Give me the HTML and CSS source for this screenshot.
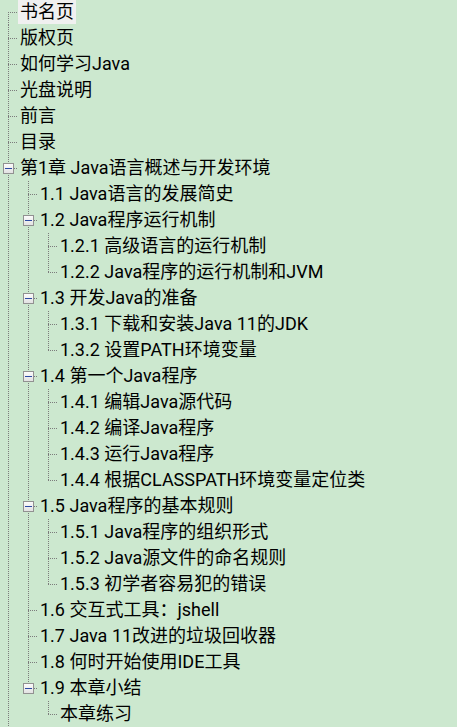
FILE: index.html
```html
<!DOCTYPE html>
<html lang="zh-CN">
<head>
<meta charset="utf-8">
<title>目录树</title>
<link rel="stylesheet" href="styles.css">
</head>
<body>
<div class="tree">
  <div class="row"><span class="c f"></span><span class="label sel">书名页</span></div>
  <div class="row"><span class="c t"></span><span class="label">版权页</span></div>
  <div class="row"><span class="c t"></span><span class="label">如何学习Java</span></div>
  <div class="row"><span class="c t"></span><span class="label">光盘说明</span></div>
  <div class="row"><span class="c t"></span><span class="label">前言</span></div>
  <div class="row"><span class="c t"></span><span class="label">目录</span></div>
  <div class="row"><span class="c t"><span class="box"><span class="minus"></span></span></span><span class="label">第1章 Java语言概述与开发环境</span></div>
  <div class="row"><span class="c p"></span><span class="c t"></span><span class="label">1.1 Java语言的发展简史</span></div>
  <div class="row"><span class="c p"></span><span class="c t"><span class="box"><span class="minus"></span></span></span><span class="label">1.2 Java程序运行机制</span></div>
  <div class="row"><span class="c p"></span><span class="c p"></span><span class="c t"></span><span class="label">1.2.1 高级语言的运行机制</span></div>
  <div class="row"><span class="c p"></span><span class="c p"></span><span class="c l"></span><span class="label">1.2.2 Java程序的运行机制和JVM</span></div>
  <div class="row"><span class="c p"></span><span class="c t"><span class="box"><span class="minus"></span></span></span><span class="label">1.3 开发Java的准备</span></div>
  <div class="row"><span class="c p"></span><span class="c p"></span><span class="c t"></span><span class="label">1.3.1 下载和安装Java 11的JDK</span></div>
  <div class="row"><span class="c p"></span><span class="c p"></span><span class="c l"></span><span class="label">1.3.2 设置PATH环境变量</span></div>
  <div class="row"><span class="c p"></span><span class="c t"><span class="box"><span class="minus"></span></span></span><span class="label">1.4 第一个Java程序</span></div>
  <div class="row"><span class="c p"></span><span class="c p"></span><span class="c t"></span><span class="label">1.4.1 编辑Java源代码</span></div>
  <div class="row"><span class="c p"></span><span class="c p"></span><span class="c t"></span><span class="label">1.4.2 编译Java程序</span></div>
  <div class="row"><span class="c p"></span><span class="c p"></span><span class="c t"></span><span class="label">1.4.3 运行Java程序</span></div>
  <div class="row"><span class="c p"></span><span class="c p"></span><span class="c l"></span><span class="label">1.4.4 根据CLASSPATH环境变量定位类</span></div>
  <div class="row"><span class="c p"></span><span class="c t"><span class="box"><span class="minus"></span></span></span><span class="label">1.5 Java程序的基本规则</span></div>
  <div class="row"><span class="c p"></span><span class="c p"></span><span class="c t"></span><span class="label">1.5.1 Java程序的组织形式</span></div>
  <div class="row"><span class="c p"></span><span class="c p"></span><span class="c t"></span><span class="label">1.5.2 Java源文件的命名规则</span></div>
  <div class="row"><span class="c p"></span><span class="c p"></span><span class="c l"></span><span class="label">1.5.3 初学者容易犯的错误</span></div>
  <div class="row"><span class="c p"></span><span class="c t"></span><span class="label">1.6 交互式工具：jshell</span></div>
  <div class="row"><span class="c p"></span><span class="c t"></span><span class="label">1.7 Java 11改进的垃圾回收器</span></div>
  <div class="row"><span class="c p"></span><span class="c t"></span><span class="label">1.8 何时开始使用IDE工具</span></div>
  <div class="row"><span class="c p"></span><span class="c l"><span class="box"><span class="minus"></span></span></span><span class="label">1.9 本章小结</span></div>
  <div class="row"><span class="c p"></span><span class="c b"></span><span class="c l"></span><span class="label">本章练习</span></div>
</div>
</body>
</html>
```
FILE: styles.css
```css
html, body {
  margin: 0;
  padding: 0;
  background: #cce8cf;
  overflow: hidden;
}

body {
  font-family: Roboto, "Noto Sans CJK SC", sans-serif;
  font-size: 18px;
  color: #000;
}

.tree {
  margin-top: -1px;
  --dot: #7c7c7c;
  --v: repeating-linear-gradient(to bottom, var(--dot) 0 1px, transparent 1px 2px);
  --h: repeating-linear-gradient(to right, var(--dot) 0 1px, transparent 1px 2px);
}

.row {
  display: flex;
  align-items: center;
  height: 26px;
}

.c {
  flex: none;
  display: flex;
  align-items: flex-start;
  width: 20px;
  height: 26px;
  background-repeat: no-repeat;
}

/* pass-through vertical line */
.c.p {
  background-image: var(--v);
  background-size: 1px 26px;
  background-position: 8px 0;
}

/* branch with a following sibling */
.c.t {
  background-image: var(--v), var(--h);
  background-size: 1px 26px, 10px 1px;
  background-position: 8px 0, 8px 13px;
}

/* last branch */
.c.l {
  background-image: var(--v), var(--h);
  background-size: 1px 14px, 10px 1px;
  background-position: 8px 0, 8px 13px;
}

/* first root branch */
.c.f {
  background-image: var(--v), var(--h);
  background-size: 1px 13px, 10px 1px;
  background-position: 8px 13px, 8px 13px;
}

.box {
  display: block;
  box-sizing: border-box;
  width: 11px;
  height: 11px;
  margin: 8px 0 0 3px;
  border: 1px solid #919191;
  background: linear-gradient(to bottom, #fbfbfb, #e2e2e2);
}

.minus {
  display: block;
  width: 7px;
  height: 1px;
  margin: 4px 0 0 1px;
  background: #2b4aa3;
}

.label {
  display: block;
  margin-left: -2px;
  padding: 0 2px;
  height: 24px;
  line-height: 24px;
  white-space: nowrap;
}

.label.sel {
  background: #f0f0f0;
}
```
